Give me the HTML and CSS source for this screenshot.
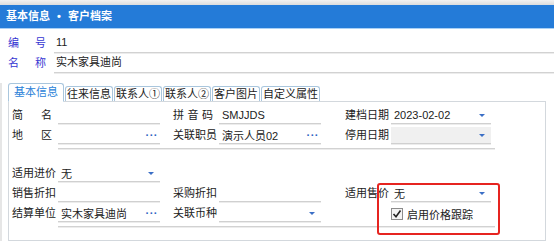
FILE: index.html
```html
<!DOCTYPE html>
<html lang="zh-CN">
<head>
  <meta charset="UTF-8" />
  <title>客户档案</title>
  <link rel="stylesheet" href="styles.css">
</head>
<body>
  <div class="topbar"></div>
  <div class="title">基本信息 <span class="bullet">&bull;</span> 客户档案</div>

  <!-- 编号 / 名称 -->
  <div class="base">
    <div class="base-row">
      <span class="base-label">编 号</span>
      <span class="base-value">11</span>
    </div>
    <div class="base-row">
      <span class="base-label">名 称</span>
      <span class="base-value">实木家具迪尚</span>
    </div>
  </div>

  <div class="sheet">
    <!-- Tabs -->
    <div class="tabs">
      <span class="tab active">基本信息</span>
      <span class="tab">往来信息</span>
      <span class="tab">联系人①</span>
      <span class="tab">联系人②</span>
      <span class="tab">客户图片</span>
      <span class="tab">自定义属性</span>
    </div>

    <div class="panel">
      <div class="row">
        <div class="field"><span class="field-label">简 名</span><span class="input"></span></div>
        <div class="field"><span class="field-label">拼 音 码</span><span class="input">SMJJDS</span></div>
        <div class="field"><span class="field-label">建档日期</span><span class="input narrow">2023-02-02<i class="arrow"></i></span></div>
      </div>
      <div class="row">
        <div class="field"><span class="field-label">地 区</span><span class="input"><i class="dots">···</i></span></div>
        <div class="field"><span class="field-label">关联职员</span><span class="input">演示人员02<i class="dots">···</i></span></div>
        <div class="field"><span class="field-label">停用日期</span><span class="input narrow disabled"><i class="arrow"></i></span></div>
      </div>
      <div class="sep"></div>

      <div class="group">
        <div class="row">
          <div class="field"><span class="field-label">适用进价</span><span class="input">无<i class="arrow"></i></span></div>
        </div>
        <div class="row">
          <div class="field"><span class="field-label">销售折扣</span><span class="input"></span></div>
          <div class="field"><span class="field-label">采购折扣</span><span class="input"></span></div>
          <div class="field"><span class="field-label">适用售价</span><span class="input narrow">无<i class="arrow"></i></span></div>
        </div>
        <div class="row">
          <div class="field"><span class="field-label">结算单位</span><span class="input">实木家具迪尚<i class="dots">···</i></span></div>
          <div class="field"><span class="field-label">关联币种</span><span class="input"><i class="arrow"></i></span></div>
          <div class="field">
            <span class="field-label"></span>
            <label class="check">
              <svg width="12" height="12" viewBox="0 0 12 12">
                <rect x="0.5" y="0.5" width="11" height="11" fill="#f4f4f4" stroke="#8c8c8c"/>
                <polyline points="2.5,6 5,8.8 9.5,2.5" fill="none" stroke="#222" stroke-width="1.6"/>
              </svg>
              启用价格跟踪
            </label>
          </div>
        </div>
      </div>
      <div class="sep"></div>
    </div>
  </div>

  <!-- annotation -->
  <div class="highlight"></div>
</body>
</html>
```

FILE: styles.css
```css
/* Global */
body {
  margin: 0;
  width: 554px;
  height: 242px;
  overflow: hidden;
  position: relative;
  background: #fff;
  color: #222;
  font-family: "Liberation Sans", "Noto Sans CJK SC", sans-serif;
  font-size: 11px;
}
i { font-style: normal; }

/* Header */
.topbar {
  height: 5px;
  background: linear-gradient(#f2f2f2, #dcdcdc);
}
.title {
  height: 23px;
  line-height: 23px;
  padding-left: 6px;
  background: #247bd8;
  color: #fff;
  font-weight: bold;
  border-bottom: 1px solid #a9d0f5;
}
.bullet {
  margin: 0 4px;
}

/* 编号 / 名称 */
.base {
  padding: 4px 0 0 8px;
}
.base-row {
  display: flex;
  height: 20px;
}
.base-label {
  width: 38px;
  margin-right: 8px;
  line-height: 20px;
  color: #3636d2;
  text-align: justify;
  text-align-last: justify;
}
.base-value {
  flex: 1;
  line-height: 19px;
  padding-left: 2px;
  border-bottom: 1px solid #d2d2d2;
  box-shadow: 0 1px 0 #ececec;
}

/* Tabs */
.sheet {
  border-left: 2px solid #e6e6e6;
  margin-top: 10px;
}
.tabs {
  display: flex;
  align-items: flex-end;
  gap: 1px;
  height: 18px;
  margin-left: 6px;
}
.tab {
  box-sizing: border-box;
  height: 15px;
  line-height: 14px;
  padding: 0 1px;
  border: 1px solid #a9c6dd;
  border-bottom: none;
  border-radius: 3px 3px 0 0;
  background: #fff;
}
.tab.active {
  position: relative;
  z-index: 1;
  height: 19px;
  line-height: 17px;
  margin-bottom: -1px;
  padding: 0 5px;
  border-bottom: 1px solid #fff;
  color: #2a7fd8;
}

/* Panel */
.panel {
  box-sizing: border-box;
  width: 538px;
  height: 140px;
  margin-left: 6px;
  padding: 2px 0 0 3px;
  border: 1px solid #d3d8dd;
}
.row {
  display: grid;
  grid-template-columns: 161px 172px 150px;
  height: 20px;
}
.field {
  display: flex;
}
.field-label {
  width: 40px;
  margin-right: 6px;
  padding-top: 3px;
  line-height: 17px;
  white-space: nowrap;
  text-align: justify;
  text-align-last: justify;
}
.input {
  position: relative;
  box-sizing: border-box;
  display: flex;
  align-items: center;
  width: 102px;
  height: 17px;
  margin-top: 3px;
  padding-left: 3px;
  border-bottom: 1px solid #d0d0d0;
  box-shadow: 0 1px 0 #ececec;
}
.input.narrow { width: 100px; }
.input.disabled { background: #f0f0f0; }

.arrow {
  position: absolute;
  right: 6px;
  top: 7px;
  border-left: 3px solid transparent;
  border-right: 3px solid transparent;
  border-top: 3px solid #3b6fc6;
}
.dots {
  position: absolute;
  right: 2px;
  color: #2f66c4;
  font-weight: bold;
  letter-spacing: 0.5px;
}

.sep {
  width: 437px;
  height: 1px;
  margin: 4px 0 0 46px;
  background: #d2d2d2;
  box-shadow: 0 1px 0 #ececec;
}
.group {
  margin-top: 13px;
}

.check {
  display: flex;
  align-items: center;
  gap: 4px;
  padding-top: 3px;
}

/* red annotation frame */
.highlight {
  position: absolute;
  left: 377px;
  top: 183px;
  width: 123px;
  height: 52px;
  box-sizing: border-box;
  border: 2px solid #e62420;
  border-radius: 3px;
}
```
